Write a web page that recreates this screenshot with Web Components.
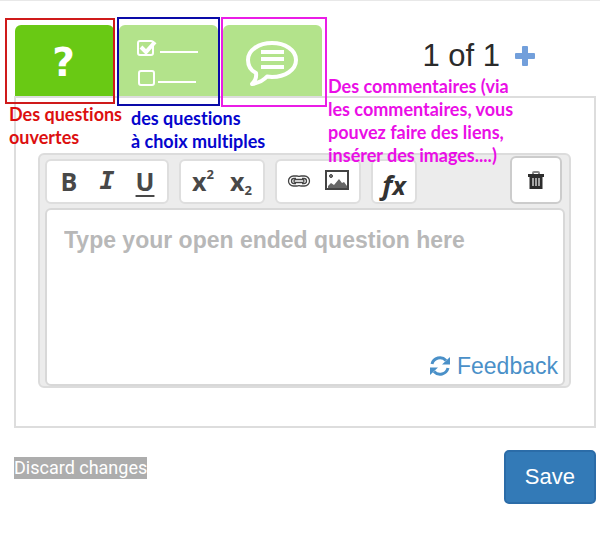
<!DOCTYPE html>
<html lang="fr">
<head>
<meta charset="utf-8">
<meta name="viewport" content="width=device-width, initial-scale=1">
<title>Question editor</title>
<style>
  body {
    margin: 0;
    background: #fff;
    font-family: "Liberation Sans", Arial, sans-serif;
    color: #333;
  }
</style>
</head>
<body>
<question-app></question-app>

<script>
class CallOut extends HTMLElement {
  constructor() {
    super();
    this.attachShadow({ mode: 'open' }).innerHTML = `
      <style>
        :host {
          display: block;
          position: absolute;
          z-index: 2;
          box-sizing: border-box;
          border: 2px solid var(--frame);
          pointer-events: none;
        }
        p {
          position: absolute;
          top: 100%;
          left: 2px;
          margin: 0;
          padding-top: 1px;
          font: bold 18px/23px Lato, sans-serif;
          font-variant-ligatures: none;
          white-space: nowrap;
        }
        :host([indent]) p {
          left: 12px;
          padding-top: 3px;
        }
        :host([side]) p {
          top: 55px;
          left: calc(100% + 3px);
        }
      </style>
      <p><slot></slot></p>
    `;
  }
}
customElements.define('call-out', CallOut);

class QuestionTab extends HTMLElement {
  constructor() {
    super();
    this.attachShadow({ mode: 'open' }).innerHTML = `
      <style>
        :host {
          display: block;
          position: relative;
          width: 99px;
          height: 71px;
        }
        button {
          display: flex;
          align-items: center;
          justify-content: center;
          box-sizing: border-box;
          width: 100%;
          height: 100%;
          padding: 4px 2px 0 0;
          border: 0;
          border-radius: 6px 6px 0 0;
          background: #b3e38b;
          color: #fff;
          font: bold 39px/40px "DejaVu Sans", sans-serif;
        }
        :host([active]) button {
          background: #69c914;
        }
      </style>
      <button type="button" aria-label="${this.getAttribute('label')}"><slot></slot></button>
      <slot name="note"></slot>
    `;
  }
}
customElements.define('question-tab', QuestionTab);

class QuestionPager extends HTMLElement {
  constructor() {
    super();
    this.attachShadow({ mode: 'open' }).innerHTML = `
      <style>
        :host {
          display: flex;
          align-items: center;
          gap: 14px;
          font-size: 31px;
          line-height: 36px;
          color: #2b2b2b;
        }
        button {
          display: flex;
          padding: 0;
          border: 0;
          background: none;
        }
      </style>
      <span><slot></slot></span>
      <button type="button" aria-label="Add question">
        <svg width="22" height="22" viewBox="0 0 22 22" fill="#729fdb">
          <rect x="1" y="8" width="20" height="6" rx="1"/>
          <rect x="8" y="1" width="6" height="20" rx="1"/>
        </svg>
      </button>
    `;
  }
}
customElements.define('question-pager', QuestionPager);

class ToolGroup extends HTMLElement {
  constructor() {
    super();
    this.attachShadow({ mode: 'open' }).innerHTML = `
      <style>
        :host {
          display: flex;
          align-items: center;
          box-sizing: border-box;
          height: 45px;
          padding: 0 3px;
          border: 2px solid #dedede;
          border-radius: 6px;
          background: #fff;
        }
        :host([raised]) {
          height: 48px;
          border-color: #ccc;
        }
      </style>
      <slot></slot>
    `;
  }
}
customElements.define('tool-group', ToolGroup);

class ToolButton extends HTMLElement {
  constructor() {
    super();
    this.attachShadow({ mode: 'open' }).innerHTML = `
      <style>
        :host {
          display: block;
        }
        button {
          display: flex;
          align-items: center;
          justify-content: center;
          width: 38px;
          height: 38px;
          padding: 0 0 2px;
          border: 0;
          background: none;
          color: #484848;
          font: bold 25px/28px "Open Sans", sans-serif;
        }
        :host([wide]) button {
          width: 42px;
          padding: 0;
        }
        :host([kind="italic"]) button {
          font-family: "DejaVu Sans Mono", monospace;
          font-style: italic;
        }
        :host([kind="underline"]) button {
          text-decoration: underline 2px;
          text-underline-offset: 4px;
        }
        :host([kind="function"]) button {
          width: 36px;
          padding: 6px 0 0;
          color: #333;
          font: italic bold 27px/22px "Open Sans", sans-serif;
        }
        ::slotted(sup), ::slotted(sub) {
          font-size: 13px;
          line-height: 13px;
        }
        ::slotted(sup) {
          align-self: flex-start;
          margin-top: 5px;
        }
        ::slotted(sub) {
          align-self: flex-end;
          margin-bottom: 2px;
        }
        ::slotted(small) {
          font-size: 25px;
          line-height: 22px;
        }
      </style>
      <button type="button" aria-label="${this.getAttribute('label')}"><slot></slot></button>
    `;
  }
}
customElements.define('tool-button', ToolButton);

class QuestionEditor extends HTMLElement {
  constructor() {
    super();
    this.attachShadow({ mode: 'open' }).innerHTML = `
      <style>
        :host {
          display: block;
          padding: 1px 4px 0 5px;
          border: 2px solid #dcdcdc;
          border-radius: 6px;
          background: #ececec;
        }
        .toolbar {
          display: flex;
          align-items: flex-end;
          gap: 10px;
          padding-right: 3px;
        }
        .toolbar tool-group[raised] {
          margin-left: auto;
        }
        .page {
          display: flex;
          flex-direction: column;
          margin-top: 4px;
          padding: 12px 5px 4px 17px;
          border: 2px solid #d8d8d8;
          border-radius: 6px;
          background: #fff;
        }
        textarea {
          box-sizing: border-box;
          width: 100%;
          height: 130px;
          padding: 4px 0;
          border: 0;
          outline: 0;
          resize: none;
          background: none;
          color: #333;
          font: bold 23px/28px "Liberation Sans", Arial, sans-serif;
        }
        textarea::placeholder {
          color: #b8b8b8;
          opacity: 1;
        }
        a {
          display: flex;
          align-items: center;
          align-self: flex-end;
          gap: 7px;
          color: #4a90c8;
          font-size: 23px;
          line-height: 28px;
          text-decoration: none;
        }
      </style>
      <div class="toolbar">
        <tool-group>
          <tool-button label="Bold">B</tool-button>
          <tool-button label="Italic" kind="italic">I</tool-button>
          <tool-button label="Underline" kind="underline">U</tool-button>
        </tool-group>
        <tool-group>
          <tool-button label="Superscript">x<sup>2</sup></tool-button>
          <tool-button label="Subscript">x<sub>2</sub></tool-button>
        </tool-group>
        <tool-group>
          <tool-button label="Link">
            <svg width="24" height="14" viewBox="0 0 24 14" fill="none" stroke="#444">
              <path d="M10 12H6.500a5 5 0 0 1 0-10H10q2 0 2 1 0-1 2-1h3.500a5 5 0 0 1 0 10H14q-2 0-2-1 0 1-2 1z" stroke-width="1.300"/>
              <path d="M9 4.500H7a2.500 2.500 0 0 0 0 5h2M15 4.500h2a2.500 2.500 0 0 1 0 5h-2" stroke-width="1.300"/>
              <rect x="7" y="5.500" width="10" height="3" rx="1.500" stroke-width="1.300"/>
            </svg>
          </tool-button>
          <tool-button label="Image">
            <svg width="24" height="21" viewBox="0 0 24 21">
              <rect x="1" y="1" width="22" height="18" fill="#fff" stroke="#444" stroke-width="2"/>
              <circle cx="6" cy="6" r="1.500" fill="#777" stroke="#444"/>
              <path d="M3 18v-2l3-3 3 2 5-6 3 4 2-1 3 4v2z" fill="#666"/>
            </svg>
          </tool-button>
        </tool-group>
        <tool-group>
          <tool-button label="Formula" kind="function">f<small>x</small></tool-button>
        </tool-group>
        <tool-group raised>
          <tool-button label="Delete" wide>
            <svg width="16" height="18" viewBox="0 0 16 18">
              <path d="M5 3V2q0-1 1-1h4q1 0 1 1v1" fill="none" stroke="#888" stroke-width="2"/>
              <path d="M0 3h16v3H0z" fill="#2d2d2d"/>
              <path d="M1.500 5h13v13h-13z" fill="#2d2d2d"/>
              <path d="M4 7h2v8H4zM7 7h2v8H7zM10 7h2v8h-2z" fill="#a5a5a5"/>
            </svg>
          </tool-button>
        </tool-group>
      </div>
      <div class="page">
        <textarea aria-label="Question" placeholder="Type your open ended question here"></textarea>
        <a href="#feedback">
          <svg width="20" height="20" viewBox="0 0 20 20">
            <path d="M2 8a8.200 8.200 0 0 1 14-3.500M18 12a8.200 8.200 0 0 1-14 3.500" fill="none" stroke="#4a90c8" stroke-width="3"/>
            <path d="M20 1v7.500h-8zM0 19v-7.500h8z" fill="#4a90c8"/>
          </svg>
          Feedback
        </a>
      </div>
    `;
  }
}
customElements.define('question-editor', QuestionEditor);

class QuestionApp extends HTMLElement {
  constructor() {
    super();
    this.attachShadow({ mode: 'open' }).innerHTML = `
      <style>
        :host {
          display: block;
          padding: 24px 4px 24px 14px;
          border-top: 1px solid #e8e8e8;
        }
        header {
          display: flex;
          align-items: flex-start;
          justify-content: space-between;
        }
        .tabs {
          display: flex;
          gap: 5px;
          padding-left: 1px;
        }
        question-pager {
          margin: 13px 60px 0 0;
        }
        main {
          padding: 55px 23px 38px 22px;
          border: 2px solid #ddd;
        }
        footer {
          display: flex;
          align-items: flex-start;
          justify-content: space-between;
          margin-top: 22px;
        }
        .discard {
          margin-top: 7px;
          padding: 0;
          border: 0;
          background: #adadad;
          color: #fff;
          font: 18px/22px Roboto, sans-serif;
        }
        .save {
          padding: 12px 19px;
          border: 2px solid #2b6ca8;
          border-radius: 5px;
          background: #337ab7;
          color: #fff;
          font: 22px/26px "Liberation Sans", Arial, sans-serif;
        }
        .open {
          --frame: #cf1a1a;
          inset: -7px -1px -8px -10px;
          color: #dc0f0f;
        }
        .choice {
          --frame: #0a0aa8;
          inset: -8px -2px -10px -2px;
          color: #0505cd;
        }
        .comment {
          --frame: #ea1ce6;
          inset: -8px -5px -11px -2px;
          color: #ea0ee6;
        }
      </style>
      <header>
        <div class="tabs">
          <question-tab active label="Question ouverte">?
            <call-out slot="note" class="open">Des questions<br>ouvertes</call-out>
          </question-tab>
          <question-tab label="Choix multiples">
            <svg width="64" height="50" viewBox="0 0 64 50" fill="none" stroke="#fff">
              <rect x="2" y="3" width="15" height="14" rx="2" stroke-width="2"/>
              <path d="M5 9l5 5 9-10" stroke-width="4"/>
              <rect x="3" y="33" width="15" height="14" rx="2" stroke-width="2"/>
              <path d="M24 14h38M22 44h38" stroke-width="2"/>
            </svg>
            <call-out slot="note" class="choice" indent>des questions<br>à choix multiples</call-out>
          </question-tab>
          <question-tab label="Commentaire">
            <svg width="54" height="46" viewBox="0 0 54 46" fill="none" stroke="#fff">
              <path d="M11 33C5 30 3 25 3 20 3 10 14 3 27 3s24 7 24 17-11 17-24 17l-5-.5C18 41 13 43 7 44q5-5 4-11z" stroke-width="4" stroke-linejoin="round"/>
              <path d="M16 12h23M16 19h23M16 27h23" stroke-width="4"/>
            </svg>
            <call-out slot="note" class="comment" side>Des commentaires (via<br>les commentaires, vous<br>pouvez faire des liens,<br>insérer des images....)</call-out>
          </question-tab>
        </div>
        <question-pager>1 of 1</question-pager>
      </header>
      <main>
        <question-editor></question-editor>
      </main>
      <footer>
        <button type="button" class="discard">Discard changes</button>
        <button type="button" class="save">Save</button>
      </footer>
    `;
  }
}
customElements.define('question-app', QuestionApp);
</script>
</body>
</html>
